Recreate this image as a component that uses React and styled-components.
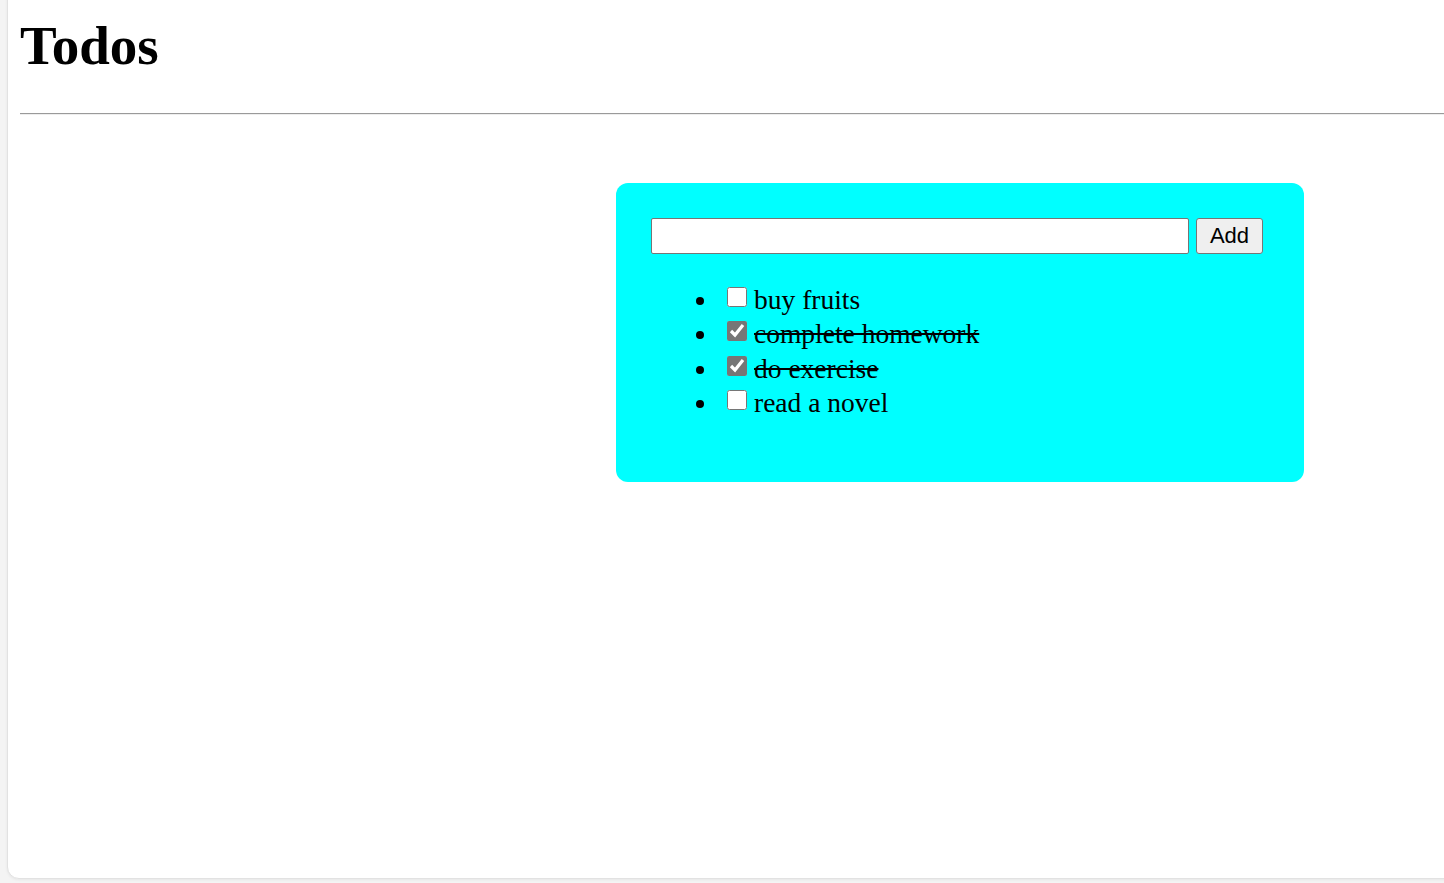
import React, { useState } from "react";
import styled, { createGlobalStyle } from "styled-components";

const GlobalStyle = createGlobalStyle`
  html, body {
    margin: 0;
    padding: 0;
    height: 100%;
    overflow: hidden;
    background: #f4f4f4;
  }
  #root {
    height: 100%;
  }
`;

const Frame = styled.div`
  box-sizing: border-box;
  margin: -20px 0 0 7px;
  width: calc(100% + 40px);
  height: 899px;
  background: #fff;
  border: 1px solid #e2e2e2;
  border-radius: 12px;
  box-shadow: 0 1px 3px rgba(0, 0, 0, 0.06);
  padding: 20px 0 0 12px;
  font-family: "Liberation Serif", "Times New Roman", serif;
  color: #000;
`;

const Title = styled.h1`
  margin: 0;
  padding-top: 15px;
  font-size: 55px;
  line-height: 60px;
  font-weight: bold;
`;

const Rule = styled.hr`
  margin: 37px 0 0 0;
  border: 0;
  border-top: 1px solid #9a9a9a;
  border-bottom: 1px solid #eeeeee;
  height: 0;
`;

const Panel = styled.div`
  box-sizing: border-box;
  margin: 68px 0 0 596px;
  width: 688px;
  height: 299px;
  background: #00ffff;
  border-radius: 12px;
  padding: 35px;
`;

const InputRow = styled.div`
  display: flex;
  gap: 7px;
  align-items: center;
`;

const TextInput = styled.input`
  box-sizing: border-box;
  width: 538px;
  height: 36px;
  border: 1px solid #767676;
  border-radius: 2px;
  background: #fff;
  padding: 0 4px;
  font-size: 20px;
  font-family: "Liberation Sans", Arial, sans-serif;
  outline: none;
`;

const AddButton = styled.button`
  box-sizing: border-box;
  width: 67px;
  height: 36px;
  border: 1px solid #767676;
  border-radius: 3px;
  background: #efefef;
  font-family: "Liberation Sans", Arial, sans-serif;
  font-size: 22px;
  color: #000;
  padding: 0;
`;

const List = styled.ul`
  margin: 29px 0 0 0;
  padding-left: 68px;
  font-size: 27.5px;
`;

const Item = styled.li`
  line-height: 34.3px;
  text-decoration: ${(p) => (p.$done ? "line-through" : "none")};
`;

const Check = styled.input`
  width: 20px;
  height: 20px;
  margin: 0 7px 0 8px;
  vertical-align: 2px;
  accent-color: #767676;
`;

const initial = [
  { text: "buy fruits", done: false },
  { text: "complete homework", done: true },
  { text: "do exercise", done: true },
  { text: "read a novel", done: false },
];

export default function App() {
  const [todos, setTodos] = useState(initial);
  const [draft, setDraft] = useState("");

  const toggle = (i) =>
    setTodos(todos.map((t, j) => (j === i ? { ...t, done: !t.done } : t)));

  const add = () => {
    if (!draft.trim()) return;
    setTodos([...todos, { text: draft, done: false }]);
    setDraft("");
  };

  return (
    <>
      <GlobalStyle />
      <Frame>
        <Title>Todos</Title>
        <Rule />
        <Panel>
          <InputRow>
            <TextInput value={draft} onChange={(e) => setDraft(e.target.value)} />
            <AddButton onClick={add}>Add</AddButton>
          </InputRow>
          <List>
            {todos.map((t, i) => (
              <Item key={i} $done={t.done}>
                <Check type="checkbox" checked={t.done} onChange={() => toggle(i)} />
                {t.text}
              </Item>
            ))}
          </List>
        </Panel>
      </Frame>
    </>
  );
}
